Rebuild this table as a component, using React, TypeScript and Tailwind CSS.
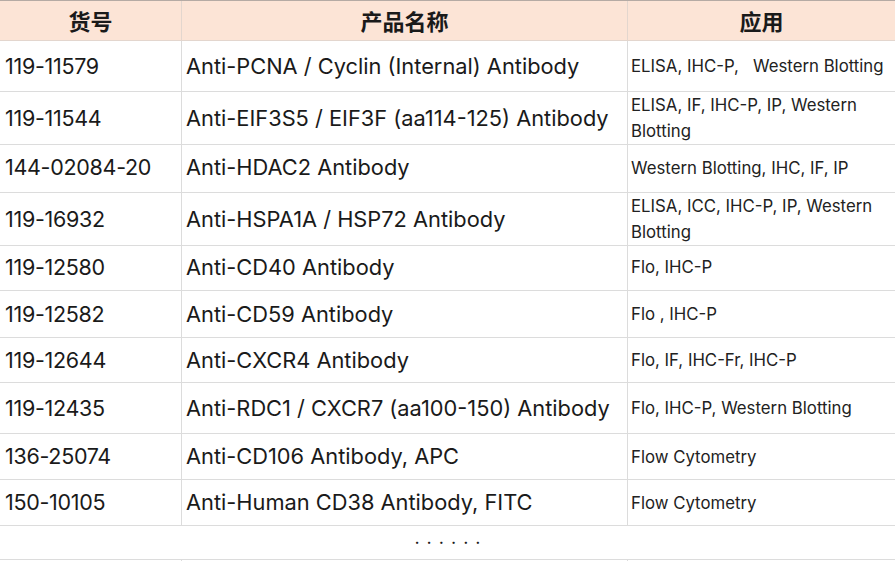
import React from "react";

const rows: { id: string; name: string; app: string; h: number }[] = [
  { id: "119-11579", name: "Anti-PCNA / Cyclin (Internal) Antibody", app: "ELISA, IHC-P,\u00a0\u00a0\u00a0Western Blotting", h: 51 },
  { id: "119-11544", name: "Anti-EIF3S5 / EIF3F (aa114-125) Antibody", app: "ELISA, IF, IHC-P, IP, Western Blotting", h: 51 },
  { id: "144-02084-20", name: "Anti-HDAC2 Antibody", app: "Western Blotting, IHC, IF, IP", h: 50 },
  { id: "119-16932", name: "Anti-HSPA1A / HSP72 Antibody", app: "ELISA, ICC, IHC-P, IP, Western Blotting", h: 51 },
  { id: "119-12580", name: "Anti-CD40 Antibody", app: "Flo, IHC-P", h: 47 },
  { id: "119-12582", name: "Anti-CD59 Antibody", app: "Flo , IHC-P", h: 47 },
  { id: "119-12644", name: "Anti-CXCR4 Antibody", app: "Flo, IF, IHC-Fr, IHC-P", h: 45 },
  { id: "119-12435", name: "Anti-RDC1 / CXCR7 (aa100-150) Antibody", app: "Flo, IHC-P, Western Blotting", h: 51 },
  { id: "136-25074", name: "Anti-CD106 Antibody, APC", app: "Flow Cytometry", h: 46 },
  { id: "150-10105", name: "Anti-Human CD38 Antibody, FITC", app: "Flow Cytometry", h: 46 },
];

const font = { fontFamily: 'Inter, "Noto Sans CJK SC", sans-serif' };
const cjk = { fontFamily: '"Noto Sans CJK SC", sans-serif' };

export default function App() {
  return (
    <div className="w-[895px] h-[561px] overflow-hidden bg-white text-[#1a1a1a]" style={font}>
      <div className="grid grid-cols-[182px_446px_1fr] border-t border-[#b5aaa4]">
        <div className="h-[40px] bg-[#fce4d6] border-r border-b border-[#e3d6ce] flex items-center justify-center text-[22px] font-bold" style={cjk}>货号</div>
        <div className="h-[40px] bg-[#fce4d6] border-r border-b border-[#e3d6ce] flex items-center justify-center text-[22px] font-bold" style={cjk}>产品名称</div>
        <div className="h-[40px] bg-[#fce4d6] border-b border-[#e3d6ce] flex items-center justify-center text-[22px] font-bold" style={cjk}>应用</div>
      </div>
      {rows.map((r) => (
        <div key={r.id} className="grid grid-cols-[182px_446px_1fr]" style={{ height: r.h }}>
          <div className="border-r border-b border-[#dcdcdc] flex items-center pl-[5px] text-[21.5px] tracking-[-0.3px]">{r.id}</div>
          <div className="border-r border-b border-[#dcdcdc] flex items-center pl-[4px] text-[21.8px] whitespace-nowrap">{r.name}</div>
          <div className="border-b border-[#dcdcdc] flex items-center pl-[3px] pr-[6px] text-[16.8px] leading-[26px] text-[#222]">{r.app}</div>
        </div>
      ))}
      <div className="h-[34px] border-b border-[#dcdcdc] flex items-center justify-center text-[18px] tracking-[7px] pl-[7px] pb-[10px]">......</div>
      <div className="grid grid-cols-[182px_446px_1fr] h-[40px]">
        <div className="border-r border-[#dcdcdc]" />
        <div className="border-r border-[#dcdcdc]" />
        <div />
      </div>
    </div>
  );
}
